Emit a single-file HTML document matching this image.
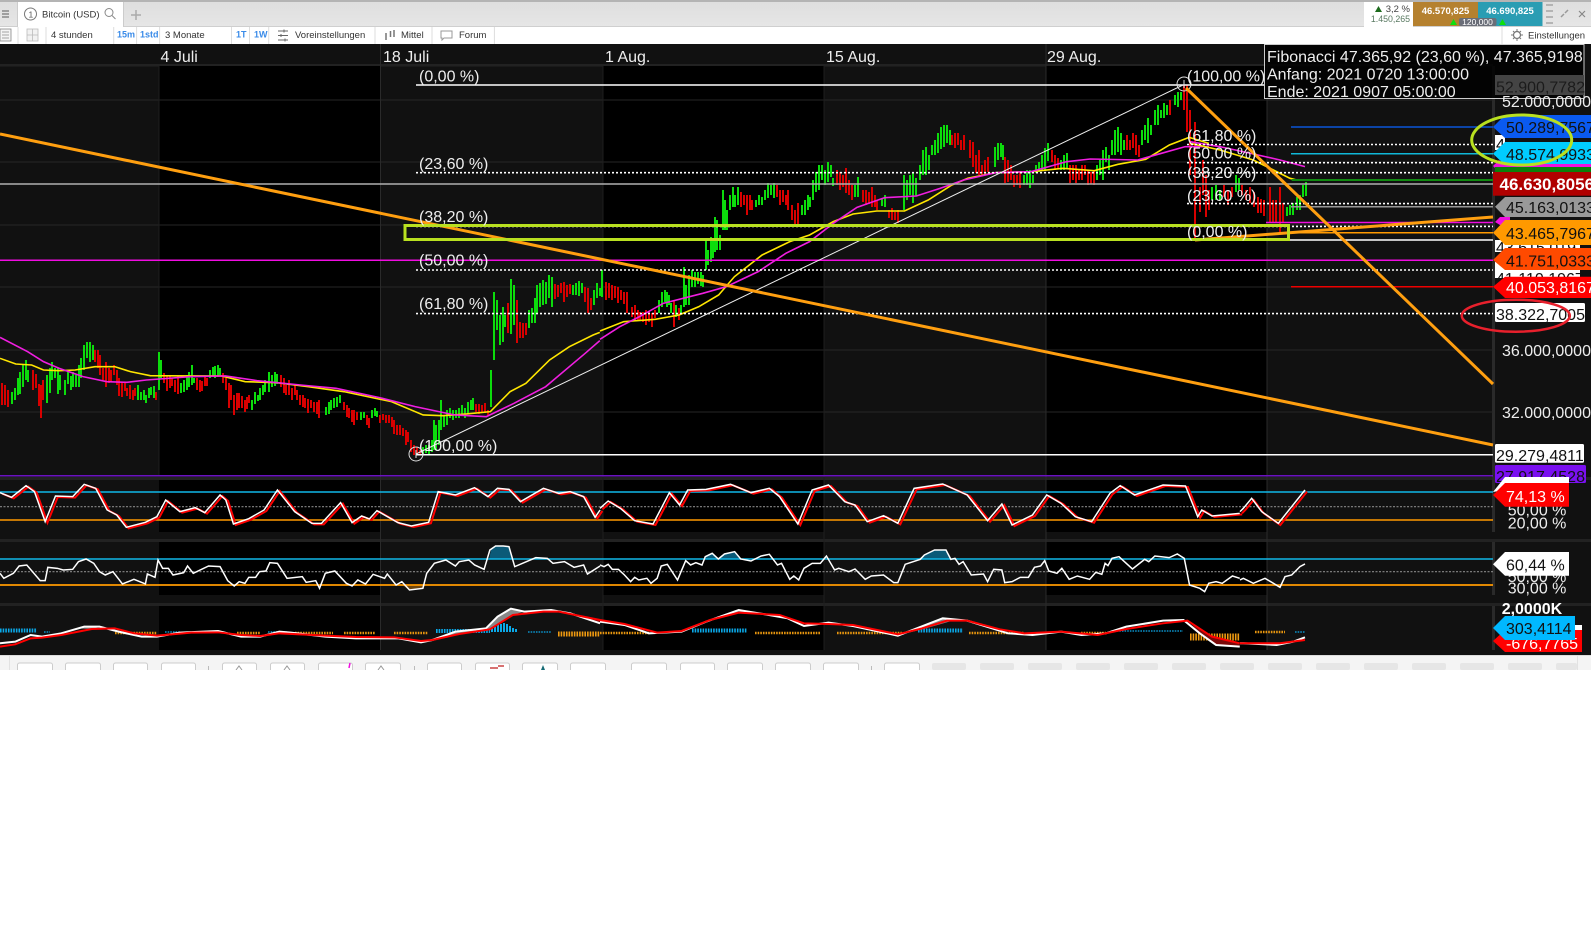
<!DOCTYPE html>
<html lang="de"><head><meta charset="utf-8"><title>Bitcoin (USD)</title>
<style>
html,body{margin:0;padding:0;background:#fff;width:1591px;height:938px;overflow:hidden}
svg{display:block;position:absolute;left:0;top:0}
text{font-family:"Liberation Sans",sans-serif}
.s *{vector-effect:non-scaling-stroke;fill:none}
.f{font-size:16px;fill:#eee}
.d{font-size:16px;fill:#111}
.w{font-size:16px;fill:#fff}
.t{font-size:9.5px;fill:#333}
.b{font-size:9px;fill:#3a8be8;font-weight:bold}
.fib{stroke:#fff;stroke-width:1.6;stroke-dasharray:2 2;fill:none}
</style></head><body>
<svg width="1591" height="938" viewBox="0 0 1591 938" xmlns="http://www.w3.org/2000/svg">
<defs>
<linearGradient id="top" x1="0" y1="0" x2="0" y2="1"><stop offset="0" stop-color="#dedede"/><stop offset="1" stop-color="#e6e6e6"/></linearGradient>
<clipPath id="chartclip"><rect x="0" y="66" width="1493" height="410"/></clipPath>
<polyline id="p1a" fill="none" vector-effect="non-scaling-stroke" points="0,98 30,112 68,77 90,95 118,185 145,108 190,110 220,73 250,85 280,150 305,165 330,202 380,187 410,170 433,120 470,155 510,143 535,158 575,105 590,120 610,192 650,176 690,150 725,90 770,155 815,190 840,190 890,128 920,188 945,168 965,177 985,152 1040,188 1075,198 1120,187 1145,95 1190,105 1240,83 1275,110 1300,85 1330,88 1360,125 1420,85 1460,100 1490,95 1525,110 1555,172 1568,150"/>
<polyline id="p1b" fill="none" vector-effect="non-scaling-stroke" points="0,115 20,93 50,115 85,152 130,162 170,68 195,105 215,60 260,58 320,43 370,68 415,55 440,80 485,162 520,60 560,45 600,95 625,105 655,155 695,137 730,160 770,55 840,42 900,75 950,152 985,102 1010,165 1060,135 1095,75 1130,100 1165,140 1205,155 1250,70 1275,47 1310,75 1380,45 1435,48 1465,140 1475,120 1500,138 1568,130"/>
<polyline id="p1c" fill="none" vector-effect="non-scaling-stroke" points="120,755 130,745 155,715 185,755 235,790 315,690"/>
</defs>

<!-- top tab bar -->
<rect width="1591" height="27" fill="url(#top)"/>
<rect width="1591" height="2" fill="#b4b4b4"/>
<rect y="26" width="1591" height="1" fill="#cfcfcf"/>
<path d="M2 11h7M2 14h7M2 17h7" stroke="#777" stroke-width="1.3"/>
<rect x="17.5" y="2" width="106" height="25" fill="#fff"/>
<path d="M17.5 27V2M123.500 27V2" stroke="#ccc"/>
<circle cx="30.500" cy="14" r="6" fill="none" stroke="#777"/>
<text x="28.500" y="17.500" font-size="8.500" fill="#555">1</text>
<text x="42" y="17.500" font-size="9.500" fill="#333">Bitcoin (USD)</text>
<circle cx="109" cy="12.500" r="4" fill="none" stroke="#888"/><path d="M112 15.500l3.500 3.500" stroke="#888"/>
<path d="M136 10v10M131 15h10" stroke="#aaa" stroke-width="1.500"/>
<rect x="1364" y="2" width="49" height="25" fill="#fff"/>
<path d="M1375 12l3.500-6 3.500 6z" fill="#1d6b1d"/>
<text x="1410" y="12" font-size="9.500" fill="#444" text-anchor="end">3,2 %</text>
<text x="1410" y="22" font-size="8.800" fill="#5a7a62" text-anchor="end">1.450,265</text>
<rect x="1413" y="2" width="65" height="24" fill="#b5812f"/>
<rect x="1478" y="2" width="64.500" height="24" fill="#2a9db3"/>
<text x="1445.500" y="14" font-size="9.500" font-weight="bold" fill="#fff" text-anchor="middle">46.570,825</text>
<text x="1510" y="14" font-size="9.500" font-weight="bold" fill="#fff" text-anchor="middle">46.690,825</text>
<path d="M1450 25l3.500-6 3.500 6zM1499 25l3.500-6 3.500 6z" fill="#0de00d"/>
<rect x="1459" y="18" width="37.500" height="8" rx="2" fill="#6a6e78"/>
<text x="1477.500" y="25" font-size="8.500" fill="#fff" text-anchor="middle">120,000</text>
<path d="M1546 5h7M1546 11h7M1546 17h7M1546 23h7" stroke="#999" stroke-width="1.200"/>
<path d="M1561 17l3-3M1565 13l3-3" stroke="#999" stroke-width="1.500"/>
<path d="M1579 11l6 6M1585 11l-6 6" stroke="#888" stroke-width="1.200"/>

<!-- second toolbar -->
<rect y="27" width="1591" height="17" fill="#fff"/>
<path d="M18 27v17M46 27v17M113.700 27v17M136.600 27v17M159.600 27v17M231.500 27v17M249.500 27v17M268.700 27v17M375 27v17M432 27v17M494.400 27v17M1502 27v17" stroke="#ddd"/>
<rect x="0" y="29" width="11" height="12" fill="#f4f4f4" stroke="#888" stroke-width=".8"/><path d="M2 32h7M2 35h7M2 38h7" stroke="#888" stroke-width=".8"/>
<rect x="27" y="29" width="11" height="12" fill="#f2f2f2" stroke="#bbb" stroke-width=".8"/><path d="M32.500 29v12M27 35h11" stroke="#bbb" stroke-width=".8"/>
<text x="51" y="38" class="t">4 stunden</text>
<text x="117" y="37.500" class="b">15m</text>
<text x="140" y="37.500" class="b">1std</text>
<text x="165" y="38" class="t">3 Monate</text>
<text x="236" y="37.500" class="b">1T</text>
<text x="254" y="37.500" class="b">1W</text>
<path d="M278 31h10M278 35.500h10M278 40h10" stroke="#666"/><path d="M284 29.500v3M281 34v3M285 38.500v3" stroke="#666"/>
<text x="295" y="38" class="t">Voreinstellungen</text>
<path d="M386 33v7M390.500 31v6M394 30v7" stroke="#777" stroke-width="1.500"/>
<text x="401" y="38" class="t">Mittel</text>
<path d="M441 31h11v7h-8l-2 2v-2h-1z" fill="none" stroke="#999"/>
<text x="459" y="38" class="t">Forum</text>
<circle cx="1517" cy="35" r="3.500" fill="none" stroke="#777" stroke-width="1.200"/><path d="M1517 29v2M1517 39v2M1511 35h2M1521 35h2M1513 31l1.500 1.500M1521 31l-1.500 1.500M1513 39l1.500-1.500M1521 39l-1.500-1.500" stroke="#777"/>
<text x="1528" y="38.500" class="t">Einstellungen</text>

<!-- chart background -->
<rect y="44" width="1591" height="611" fill="#111"/>
<rect y="64" width="1493" height="2.500" fill="#222"/>
<rect x="159" y="66" width="221.500" height="410" fill="#000"/>
<rect x="603" y="66" width="221" height="410" fill="#000"/>
<rect x="1046" y="66" width="221" height="410" fill="#000"/>
<!-- panels -->
<g fill="#000">
<rect x="159" y="480" width="221.500" height="52"/><rect x="603" y="480" width="221" height="52"/><rect x="1046" y="480" width="221" height="52"/>
<rect x="159" y="542" width="221.500" height="53"/><rect x="603" y="542" width="221" height="53"/><rect x="1046" y="542" width="221" height="53"/>
<rect x="159" y="606" width="221.500" height="44"/><rect x="603" y="606" width="221" height="44"/><rect x="1046" y="606" width="221" height="44"/>
</g>
<rect y="477" width="1591" height="3" fill="#222"/>
<rect y="539" width="1591" height="3" fill="#222"/>
<rect y="603" width="1591" height="3" fill="#222"/>
<rect x="1492" y="66" width="3" height="466" fill="#2a2a2a"/>
<rect x="1492" y="542" width="3" height="53" fill="#2a2a2a"/><rect x="1492" y="606" width="3" height="44" fill="#2a2a2a"/>
<!-- grid -->
<path d="M0 100H1493M0 162H1493M0 225H1493M0 287H1493M0 350H1493M0 412H1493" stroke="#262626"/>
<path d="M159 66V476M603 66V650M824 66V650" stroke="#1e1e1e"/>
<path d="M380.500 44V650M1046 44V650M1267 44V650" stroke="#2a2a2a"/>

<text x="160.500" y="62" class="f">4 Juli</text>
<text x="383" y="62" class="f">18 Juli</text>
<text x="605" y="62" class="f">1 Aug.</text>
<text x="826" y="62" class="f">15 Aug.</text>
<text x="1047" y="62" class="f">29 Aug.</text>

<!-- candles -->
<g clip-path="url(#chartclip)">
<path fill="none" stroke="#0cdc0c" stroke-width="2" d="M12 392v12M15 388v12M18 378v17M20 372v22M23 365v22M26 360v20M28 370v12M47 375v28M50 368v25M52 362v18M55 368v10M58 368v26M60 375v15M65 380v15M68 372v12M71 376v14M73 372v15M76 375v12M79 365v22M81 358v20M84 345v25M87 342v16M90 342v20M93 345v15M138 385v15M141 392v8M144 390v10M146 395v8M149 388v10M151 387v8M154 386v12M159 352v38M161 360v18M181 383v10M184 380v12M187 375v15M189 372v15M192 365v20M194 378v5M210 370v8M213 367v10M215 366v12M218 365v12M220 368v7M252 400v10M255 392v12M258 395v6M260 388v12M263 385v10M265 380v12M269 372v20M272 375v12M275 372v14M277 374v10M326 407v8M329 402v12M331 400v10M334 398v10M337 397v10M340 395v8M361 412v8M364 412v6M372 410v8M375 408v8M377 411v6M423 447v8M426 445v8M429 445v10M432 440v12M434 420v30M436 425v25M439 420v25M441 400v30M444 415v12M447 410v15M450 408v10M453 410v10M456 410v8M459 408v10M462 405v10M465 408v10M468 402v12M471 400v10M473 398v12M491 370v37M494 292v68M497 300v30M500 315v30M503 307v35M505 315v12M511 279v55M514 285v40M529 310v18M532 308v15M535 298v25M537 285v28M540 283v24M543 280v25M546 282v22M549 275v23M552 277v30M573 285v10M576 283v12M579 281v15M582 283v10M594 290v15M597 283v15M600 288v8M602 270v27M659 300v13M662 292v15M665 290v12M667 292v15M669 295v10M671 303v10M676 305v12M681 305v8M684 267v40M686 285v20M689 275v30M692 270v17M695 272v15M698 272v12M701 272v14M703 275v12M706 240v30M708 250v15M711 237v25M713 240v18M715 217v35M717 220v30M720 235v15M723 190v40M725 200v30M727 210v20M730 195v15M733 187v20M735 195v12M738 187v18M756 200v7M759 195v10M762 197v8M765 190v10M768 183v15M771 185v10M774 183v15M802 205v10M805 200v15M808 195v15M810 197v10M813 180v20M816 172v20M819 165v25M822 165v15M825 170v15M828 162v20M831 165v12M833 178v8M855 185v12M858 177v20M882 198v8M885 195v12M904 175v35M907 180v20M910 175v20M913 173v30M916 178v18M920 165v15M923 150v25M926 147v28M929 155v15M932 145v10M935 140v15M938 133v20M941 127v22M944 125v22M947 125v18M950 130v15M995 147v20M998 143v17M1001 143v14M1003 145v15M1024 175v10M1027 170v15M1030 170v18M1033 175v8M1036 165v8M1039 162v10M1042 155v15M1045 148v22M1048 143v18M1061 160v10M1064 155v15M1067 153v15M1097 165v15M1100 160v15M1103 150v30M1106 147v15M1109 155v15M1112 140v15M1115 130v25M1118 127v25M1121 133v22M1124 140v10M1142 130v15M1145 125v15M1148 118v25M1151 125v10M1155 110v15M1158 105v20M1161 110v8M1164 103v15M1167 105v10M1175 95v10M1178 92v15M1181 92v8M1212 187v13M1216 185v15M1220 190v10M1236 175v17M1239 178v12M1287 207v9M1290 205v10M1293 203v12M1297 197v13M1300 195v15M1303 185v12M1306 182v14"/>
<path fill="none" stroke="#d80000" stroke-width="2" d="M2 383v22M5 385v20M8 390v17M33 370v20M36 374v14M39 384v22M41 385v33M43 380v20M95 350v12M98 350v18M100 355v20M103 368v12M106 362v25M109 368v15M111 370v12M114 365v10M117 370v15M119 378v18M122 382v15M125 383v8M127 388v8M130 385v14M133 390v10M135 388v8M156 392v8M164 373v10M167 376v15M170 376v12M172 378v8M175 380v12M178 376v18M197 378v12M200 380v12M202 381v10M205 376v10M207 378v8M223 373v10M226 378v12M229 383v25M231 385v15M234 395v20M237 393v17M239 393v15M242 396v12M245 400v12M247 397v12M249 395v8M281 375v12M284 378v15M286 385v10M289 380v15M292 388v12M295 385v10M297 390v10M300 395v10M303 395v12M305 398v10M308 399v14M311 400v8M314 402v10M317 402v12M319 400v18M344 402v8M347 405v12M349 408v10M352 410v12M354 410v15M357 412v8M367 415v10M369 418v10M380 415v8M383 414v6M386 415v8M389 415v8M392 417v10M394 420v14M397 425v10M400 425v10M403 428v8M406 430v15M408 432v10M411 440v12M414 445v10M417 447v7M420 450v5M476 404v8M479 404v10M482 405v8M485 403v10M488 410v5M508 303v30M517 300v43M520 322v16M523 323v15M526 323v12M555 284v15M558 285v12M561 283v10M564 282v20M567 285v12M570 284v10M585 287v15M588 288v25M591 298v12M606 282v18M609 283v15M612 285v15M615 286v12M618 287v16M621 290v10M624 292v12M627 292v21M632 307v10M635 305v15M638 310v10M640 312v8M643 312v10M646 310v15M649 312v10M652 313v14M655 310v8M674 300v27M679 308v12M741 192v15M744 195v10M747 195v20M750 195v15M752 200v10M777 185v12M780 190v15M783 190v12M786 195v10M788 190v20M792 205v15M795 210v15M798 203v24M837 170v15M840 172v18M843 175v12M846 168v25M849 180v15M852 185v15M863 190v12M866 190v15M869 192v12M872 187v20M875 195v12M877 200v10M889 210v8M892 208v12M895 212v8M898 210v13M952 135v10M955 133v15M958 133v12M961 140v10M964 135v15M970 140v18M973 142v25M976 155v18M979 150v25M982 165v10M985 160v15M988 157v15M1005 157v26M1008 160v22M1011 165v15M1014 175v12M1017 175v10M1020 173v15M1052 150v12M1055 155v15M1058 158v10M1070 165v18M1073 165v15M1076 165v18M1079 170v10M1082 165v15M1085 165v10M1088 170v15M1091 172v12M1094 170v15M1127 135v15M1130 140v10M1133 133v15M1136 135v20M1139 145v12M1170 100v15M1184 85v25M1187 85v47M1190 110v65M1195 122v118M1200 187v25M1203 160v35M1206 175v42M1209 190v20M1224 185v12M1228 190v15M1232 187v10M1242 185v10M1246 190v10M1250 187v16M1254 192v15M1258 197v16M1261 199v14M1264 200v16M1270 187v35M1273 200v22M1276 200v22M1280 187v45M1283 203v20"/>
</g>

<!-- moving averages -->
<g class="s" transform="translate(0,250) scale(.3954,.3333)">
<polyline stroke="#ffe600" stroke-width="1.600" points="0,325 40,342 80,345 110,360 150,362 190,360 240,350 290,350 330,365 380,377 480,378 560,378 620,395 700,398 780,410 870,425 990,455 1070,495 1120,497 1180,492 1240,485 1290,425 1330,400 1390,330 1440,290 1500,255 1517,247"/>
<polyline stroke="#f01ee0" stroke-width="1.600" points="0,262 70,305 110,335 150,355 210,380 270,395 320,397 370,390 480,380 570,378 650,392 760,405 850,415 960,443 1050,470 1150,495 1230,500 1300,460 1380,410 1480,310 1517,272"/>
</g>
<g class="s" transform="translate(600,100) scale(.3954,.3333)">
<polyline stroke="#ffe600" stroke-width="1.600" points="0,693 60,665 140,658 200,645 250,620 300,585 340,530 410,465 480,425 530,405 590,365 640,342 700,333 770,333 830,300 890,255 930,235 1000,218 1090,215 1170,205 1250,212 1310,193 1380,178 1440,135 1490,112 1540,130"/>
<polyline stroke="#f01ee0" stroke-width="1.600" points="0,718 50,680 100,650 160,610 260,580 320,560 400,515 470,460 530,425 590,370 650,322 720,293 800,288 860,265 920,240 1000,218 1090,215 1180,185 1240,177 1360,180 1420,160 1480,140 1540,140"/>
</g>
<g class="s" transform="translate(1200,0) scale(.3333)">
<polyline stroke="#ffe600" stroke-width="1.600" points="-30,430 60,450 160,480 270,535 290,540"/>
<polyline stroke="#f01ee0" stroke-width="1.600" points="-30,425 60,440 160,462 240,480 315,500"/>
<path stroke="#108a10" stroke-width="2" d="M275 540H880"/>
</g>

<!-- fib levels -->
<path d="M416 85H1264" stroke="#fff" stroke-width="1.500"/>
<path d="M416 454.700H1493" stroke="#fff" stroke-width="1.500"/>
<path class="fib" d="M416 172.700H1493M416 226.400H1493M416 270H1493M416 313.600H1493"/>
<path class="fib" d="M1187 144.500H1493M1187 162.700H1493M1187 203.600H1493"/>
<path d="M1187 240H1493" stroke="#fff" stroke-width="1.500"/>
<path d="M0 184H1493" stroke="#b0b0b0" stroke-width="1.500"/>
<path d="M0 260.300H1493" stroke="#f00ce0" stroke-width="1.500"/>
<path d="M0 475.700H1493" stroke="#6a12c0" stroke-width="1.500"/>
<path d="M1291 127H1493" stroke="#0a55d8" stroke-width="1.500"/>
<path d="M1291 153.700H1493" stroke="#10b8d8" stroke-width="1.500"/>
<path d="M1291 286.700H1493" stroke="#ee0000" stroke-width="1.500"/>
<path d="M1291 206.700H1493" stroke="#999" stroke-width="1.500"/>
<path d="M1266 222.500H1493" stroke="#f00ce0" stroke-width="1.500"/>
<path d="M1291 232.700H1493" stroke="#ff9900" stroke-width="1.500"/>
<!-- diagonals -->
<path d="M416 454L1183 85" stroke="#eee" stroke-width="1"/>
<circle cx="416" cy="454" r="7" fill="none" stroke="#ddd"/><path d="M416 450v8" stroke="#ddd"/>
<circle cx="1184" cy="84" r="7" fill="none" stroke="#ddd"/><path d="M1184 80v8" stroke="#ddd"/>
<path d="M0 134L1493 445" stroke="#ff9f10" stroke-width="3"/>
<path d="M1186 88L1493 384" stroke="#ff9f10" stroke-width="3"/>
<path d="M1195 240L1493 217" stroke="#ff9f10" stroke-width="3"/>
<rect x="405" y="225.500" width="883.500" height="14" fill="none" stroke="#b9e020" stroke-width="3"/>
<!-- fib labels -->
<text x="419" y="81.500" class="f">(0,00 %)</text>
<text x="419" y="169" class="f">(23,60 %)</text>
<text x="419" y="222" class="f">(38,20 %)</text>
<text x="419" y="265.500" class="f">(50,00 %)</text>
<text x="419" y="309" class="f">(61,80 %)</text>
<text x="419" y="451" class="f">(100,00 %)</text>
<text x="1187" y="81.500" class="f">(100,00 %)</text>
<text x="1187" y="141" class="f">(61,80 %)</text>
<text x="1187" y="158.500" class="f">(50,00 %)</text>
<text x="1187" y="178" class="f">(38,20 %)</text>
<text x="1187" y="201" class="f">(23,60 %)</text>
<text x="1187" y="237" class="f">(0,00 %)</text>
<!-- tooltip -->
<rect x="1264.500" y="44.500" width="319.500" height="54" fill="#000" fill-opacity=".82" stroke="#ccc"/>
<text x="1267" y="62" class="f">Fibonacci 47.365,92 (23,60 %), 47.365,9198</text>
<text x="1267" y="79.500" class="f">Anfang: 2021 0720 13:00:00</text>
<text x="1267" y="97" class="f">Ende: 2021 0907 05:00:00</text>

<!-- right axis -->
<rect x="1495" y="75" width="89" height="20" fill="#444"/>
<text x="1496" y="92.500" class="d" fill-opacity=".8">52.900,7782</text>
<text x="1502" y="107" class="f" fill="#fff">52.000,0000</text>
<rect x="1495" y="135" width="10" height="15" fill="#fff"/><text x="1496" y="150" class="d">4</text>
<polygon points="1493,127 1505,115 1591,115 1591,138 1505,138" fill="#0a5af0"/>
<text x="1506" y="133" class="d">50.289,7567</text>
<polygon points="1493,153.700 1505,142 1591,142 1591,165 1505,165" fill="#00ccff"/>
<text x="1506" y="160" class="d">48.574,9933</text>
<polygon points="1493,166 1499,160 1505,166 1499,172" fill="#f010e0"/><rect x="1499" y="164" width="92" height="3" fill="#f010e0"/>
<rect x="1495" y="167" width="96" height="5" fill="#0a800a"/>
<rect x="1493" y="172" width="98" height="23.700" fill="#b00000"/>
<text x="1499.500" y="190" font-size="17" font-weight="bold" fill="#fff">46.630,8056</text>
<polygon points="1495,206.700 1505,197 1591,197 1591,217 1505,217" fill="#999"/>
<text x="1506" y="213" class="d">45.163,0133</text>
<polygon points="1495,222 1500,217 1510,217 1510,225 1500,225" fill="#f010e0"/>
<rect x="1495" y="240" width="85" height="12" fill="#fff"/><text x="1496" y="253" class="d">43.615,0197</text>
<polygon points="1493,232.700 1505,220 1591,220 1591,245 1505,245" fill="#ff9900"/>
<text x="1506" y="239" class="d">43.465,7967</text>
<rect x="1495" y="262" width="85" height="16" fill="#fff"/><text x="1496" y="284" class="d">41.110,1967</text>
<polygon points="1493,260 1505,248 1591,248 1591,270 1505,270" fill="#ff4a00"/>
<text x="1506" y="266.500" class="d">41.751,0333</text>
<polygon points="1493,286.700 1505,276.700 1591,276.700 1591,298 1505,298" fill="#f00"/>
<text x="1506" y="293" class="w">40.053,8167</text>
<rect x="1495" y="303" width="90" height="19" rx="1.500" fill="#fff"/>
<text x="1496" y="320" class="d">38.322,7005</text>
<text x="1502" y="356" class="f" fill="#fff">36.000,0000</text>
<text x="1502" y="418" class="f" fill="#fff">32.000,0000</text>
<rect x="1495" y="444" width="89" height="18.700" rx="1.500" fill="#fff"/>
<text x="1496" y="461" class="d">29.279,4811</text>
<rect x="1495" y="465" width="91" height="18" rx="1.500" fill="#7a10f0"/>
<text x="1496" y="482" class="d">27.917,4528</text>

<!-- panel 1 -->
<path d="M0 492H1493" stroke="#10b8e8" stroke-width="1.500"/>
<path d="M0 506.700H1493" stroke="#888" stroke-width="1.200" stroke-dasharray="2 1.500"/>
<path d="M0 520H1493" stroke="#ff9900" stroke-width="1.500"/>
<g transform="translate(0,460) scale(.3827,.3333)"><use href="#p1a" x="6" y="3" stroke="#f00" stroke-width="2"/><use href="#p1a" stroke="#fff" stroke-width="1.500"/></g>
<g transform="translate(600,470) scale(.408,.3333)"><use href="#p1b" x="6" y="3" stroke="#f00" stroke-width="2"/><use href="#p1b" stroke="#fff" stroke-width="1.500"/></g>
<g transform="translate(1200,260) scale(.3333)"><use href="#p1c" x="6" y="5" stroke="#f00" stroke-width="2"/><use href="#p1c" stroke="#fff" stroke-width="1.500"/></g>
<text x="1507.700" y="515.500" class="f">50,00 %</text>
<text x="1507.700" y="528.500" class="f">20,00 %</text>
<polygon points="1493,492 1505,477 1569,477 1569,490 1505,490" fill="#fff"/>
<polygon points="1493,495 1505,483 1569,483 1569,506.700 1505,506.700" fill="#f00"/>
<text x="1506" y="502" class="w">74,13 %</text>

<!-- panel 2 -->
<g transform="translate(0,460) scale(.3827,.3333)">
<polygon fill="#0b5a78" points="1278,297 1283,270 1295,258 1315,258 1330,260 1337,297"/>
<polygon fill="#6b4510" points="1050,375 1070,390 1105,385 1112,375"/>
</g>
<g transform="translate(600,470) scale(.408,.3333)">
<polygon fill="#0b5a78" points="255,265 275,250 290,265 305,252 330,245 347,267"/>
<polygon fill="#0b5a78" points="765,267 790,262 795,255 820,240 848,240 858,267"/>
</g>
<path d="M0 559H1493" stroke="#10b8e8" stroke-width="1.500"/>
<path d="M0 571.700H1493" stroke="#888" stroke-width="1.200" stroke-dasharray="2 1.500"/>
<path d="M0 585H1493" stroke="#ff9900" stroke-width="1.800"/>
<g class="s" transform="translate(0,460) scale(.3827,.3333)"><polyline stroke="#fff" stroke-width="1.500" points="0,340 10,355 35,340 50,318 70,315 105,362 118,362 125,322 150,325 165,330 190,328 205,305 225,297 245,310 260,335 275,345 295,335 320,372 350,358 380,372 385,342 405,352 413,300 425,325 440,325 452,345 480,338 490,318 505,340 545,318 575,320 595,362 612,378 625,365 640,370 650,352 668,352 678,335 695,333 705,308 725,310 750,355 790,350 800,367 825,362 835,385 850,340 875,333 905,370 920,378 935,360 955,372 975,343 1005,355 1012,342 1035,375 1050,365 1070,390 1105,385 1115,340 1135,310 1165,300 1190,318 1200,305 1225,300 1240,315 1265,328 1280,270 1295,258 1315,258 1330,260 1345,320 1400,293 1430,295 1445,310 1475,305 1500,322 1525,315 1535,342 1568,318"/></g>
<g class="s" transform="translate(600,470) scale(.408,.3333)"><polyline stroke="#fff" stroke-width="1.500" points="0,285 10,290 20,283 30,298 45,298 60,315 75,335 85,322 95,330 115,325 125,340 140,325 150,288 165,283 190,330 210,272 222,285 235,278 250,285 258,260 275,250 290,267 305,252 330,245 345,267 370,273 395,258 415,253 435,285 445,280 465,328 475,318 487,330 500,295 520,280 540,280 555,258 575,300 585,295 610,305 625,297 650,328 665,318 695,315 720,338 730,338 748,283 785,268 795,255 820,240 848,240 860,268 870,265 880,283 890,275 910,315 940,312 950,335 965,298 985,300 992,338 1010,335 1030,322 1050,322 1065,292 1080,288 1090,272 1100,303 1120,310 1132,295 1150,328 1170,318 1200,328 1215,307 1230,313 1238,280 1245,287 1255,265 1272,260 1305,297 1335,268 1345,275 1360,258 1395,263 1415,252 1432,265 1445,345 1470,355 1482,365 1492,340 1510,335 1525,340 1550,318 1568,325"/></g>
<g class="s" transform="translate(1200,260) scale(.3333)"><polyline stroke="#fff" stroke-width="1.500" points="120,960 130,955 160,970 195,955 240,982 255,950 275,945 300,920 315,912"/></g>
<text x="1507.700" y="582" class="f">50,00 %</text>
<text x="1507.700" y="593.500" class="f">30,00 %</text>
<polygon points="1493,564.300 1505,552 1569,552 1569,575.700 1505,575.700" fill="#fff"/>
<text x="1506" y="570.500" class="d" fill="#222">60,44 %</text>

<!-- panel 3 -->
<g fill="none" stroke-dasharray="1.600 1.040">
<path stroke="#0aa8e8" stroke-width="4" d="M0 630.500H37M436 631H490M692 630.500H747M918 630.500H963"/>
<path stroke="#0a90c8" stroke-width="1.500" d="M44 632H50M165 632H180M268 632H287M528 632H551M1114 631H1183M1295 632H1305"/>
<path stroke="#e8960f" stroke-width="2.500" d="M115 633H157M237 633H260M295 633H333M344 633H375M394 633H428M600 633H649M755 633H820M837 633H902M969 633H1024M1081 633H1106M1255 632H1285"/>
<path stroke="#f09a10" stroke-width="5" d="M558 634H600"/>
<path stroke="#f09a10" stroke-width="7" d="M1190 637H1240"/>
</g>
<path fill="none" stroke="#0aa8e8" stroke-width="2" d="M492 632v-4M495 632v-5M498 632v-7M501 632v-8M504 632v-9M507 632v-8M510 632v-6M513 632v-4M516 632v-3"/>
<g transform="translate(0,460) scale(.3827,.3333)">
<polygon fill="#888" points="1130,540 1190,515 1270,505 1300,470 1335,446 1370,455 1340,465 1280,508 1200,522"/>
<polygon fill="#888" points="200,505 240,498 265,500 240,507"/>
<polygon fill="#7a0a0a" points="1490,460 1568,490 1568,480 1460,455"/>
</g>
<g transform="translate(600,470) scale(.408,.3333)">
<polygon fill="#888" points="200,485 260,455 340,420 370,428 340,428 270,450"/>
<polygon fill="#888" points="750,490 840,445 870,450 790,478"/>
<polygon fill="#7a0a0a" points="1440,450 1500,500 1568,520 1568,530 1510,525 1470,490"/>
</g>
<g class="s" transform="translate(0,460) scale(.3827,.3333)">
<polyline stroke="#fff" stroke-width="2" points="0,550 40,545 80,525 110,530 160,520 220,500 260,500 310,515 370,530 410,530 470,518 570,513 630,530 680,530 730,515 760,518 850,530 930,535 990,535 1040,535 1100,547 1130,540 1190,515 1270,505 1300,470 1335,446 1370,455 1440,450 1490,460 1568,490"/>
<polyline stroke="#f00" stroke-width="2" points="0,560 40,553 80,535 110,533 160,525 240,507 300,505 350,520 410,527 500,518 570,517 630,525 680,528 730,520 850,527 930,531 1030,532 1100,543 1130,540 1200,522 1280,508 1340,465 1420,455 1460,455 1568,480"/>
</g>
<g class="s" transform="translate(600,470) scale(.408,.3333)">
<polyline stroke="#fff" stroke-width="2" points="0,455 60,465 120,490 200,485 260,455 340,420 400,432 460,445 500,468 560,458 620,468 730,497 840,445 900,452 1000,490 1060,495 1130,485 1180,495 1240,490 1290,470 1380,452 1430,450 1470,490 1510,525 1568,530"/>
<polyline stroke="#f00" stroke-width="2" points="0,450 60,462 140,488 200,483 270,450 340,428 440,435 500,460 560,462 620,465 730,493 790,475 850,452 900,452 980,478 1040,490 1130,485 1220,495 1290,477 1380,460 1440,452 1500,500 1568,520"/>
</g>
<g class="s" transform="translate(1200,260) scale(.3333)">
<polyline stroke="#fff" stroke-width="2" points="120,1150 130,1150 230,1155 280,1145 315,1132"/>
<polyline stroke="#f00" stroke-width="2" points="120,1150 240,1150 315,1140"/>
</g>
<text x="1501.700" y="614" font-size="16" font-weight="bold" fill="#fff">2,0000K</text>
<rect x="1505" y="625" width="77" height="6" fill="#fff"/>
<polygon points="1493,641 1505,630 1582,630 1582,652 1505,652" fill="#f00"/>
<text x="1506" y="649" class="w">-676,7765</text>
<polygon points="1493,628 1505,616 1575,616 1575,640 1505,640" fill="#00b8ff"/>
<text x="1506" y="634" class="d">303,4114</text>

<!-- ellipses -->
<ellipse cx="1521.700" cy="140" rx="50" ry="25" fill="none" stroke="#b9e020" stroke-width="3"/>
<ellipse cx="1515.800" cy="315.700" rx="54" ry="16" fill="none" stroke="#e8202c" stroke-width="2.500"/>

<!-- bottom toolbar -->
<rect y="655" width="1591" height="15" fill="#f4f4f4"/>
<rect y="655" width="1591" height="1" fill="#ddd"/>
<path d="M9.500 656v14M1577.500 656v14" stroke="#e2e2e2"/>
<g fill="#fff" stroke="#ccc">
<path d="M17.500 670v-5a2 2 0 0 1 2-2h31a2 2 0 0 1 2 2v5"/><path d="M65.500 670v-5a2 2 0 0 1 2-2h31a2 2 0 0 1 2 2v5"/><path d="M113.500 670v-5a2 2 0 0 1 2-2h30a2 2 0 0 1 2 2v5"/><path d="M161.500 670v-5a2 2 0 0 1 2-2h30a2 2 0 0 1 2 2v5"/>
<path d="M222.500 670v-5a2 2 0 0 1 2-2h30a2 2 0 0 1 2 2v5"/><path d="M270.500 670v-5a2 2 0 0 1 2-2h30a2 2 0 0 1 2 2v5"/><path d="M318.500 670v-5a2 2 0 0 1 2-2h30a2 2 0 0 1 2 2v5"/><path d="M365.500 670v-5a2 2 0 0 1 2-2h31a2 2 0 0 1 2 2v5"/>
<path d="M427.500 670v-5a2 2 0 0 1 2-2h30a2 2 0 0 1 2 2v5"/><path d="M475.500 670v-5a2 2 0 0 1 2-2h30a2 2 0 0 1 2 2v5"/><path d="M522.500 670v-5a2 2 0 0 1 2-2h31a2 2 0 0 1 2 2v5"/><path d="M570.500 670v-5a2 2 0 0 1 2-2h31a2 2 0 0 1 2 2v5"/>
<path d="M631.500 670v-5a2 2 0 0 1 2-2h31a2 2 0 0 1 2 2v5"/><path d="M680.500 670v-5a2 2 0 0 1 2-2h30a2 2 0 0 1 2 2v5"/><path d="M727.500 670v-5a2 2 0 0 1 2-2h31a2 2 0 0 1 2 2v5"/><path d="M775.500 670v-5a2 2 0 0 1 2-2h31a2 2 0 0 1 2 2v5"/><path d="M823.500 670v-5a2 2 0 0 1 2-2h31a2 2 0 0 1 2 2v5"/><path d="M884.500 670v-5a2 2 0 0 1 2-2h31a2 2 0 0 1 2 2v5"/>
</g>
<path d="M208.500 666v4M414.500 666v4M871.500 666v4" stroke="#bbb"/>
<path d="M236 670l3-4 3 4M284 670l3-4 3 4M378 670l3-4 3 4" fill="none" stroke="#999"/>
<path d="M349 668l1-5" stroke="#f010e0" stroke-width="1.500"/>
<path d="M541 670l2-5 2 5z" fill="#176b76"/>
<path d="M490 668h8M498 666h6" stroke="#c44" stroke-width="1.500"/>
<g fill="#e6e6e6">
<rect x="932" y="663" width="34" height="7" rx="2"/><rect x="980" y="663" width="34" height="7" rx="2"/><rect x="1028" y="663" width="34" height="7" rx="2"/><rect x="1076" y="663" width="34" height="7" rx="2"/><rect x="1124" y="663" width="34" height="7" rx="2"/><rect x="1172" y="663" width="34" height="7" rx="2"/><rect x="1220" y="663" width="34" height="7" rx="2"/><rect x="1268" y="663" width="34" height="7" rx="2"/><rect x="1316" y="663" width="34" height="7" rx="2"/><rect x="1364" y="663" width="34" height="7" rx="2"/><rect x="1412" y="663" width="34" height="7" rx="2"/><rect x="1460" y="663" width="34" height="7" rx="2"/><rect x="1508" y="663" width="34" height="7" rx="2"/><rect x="1556" y="663" width="21" height="7" rx="2"/>
</g>
<rect y="670" width="1591" height="268" fill="#fff"/>
</svg>
</body></html>
